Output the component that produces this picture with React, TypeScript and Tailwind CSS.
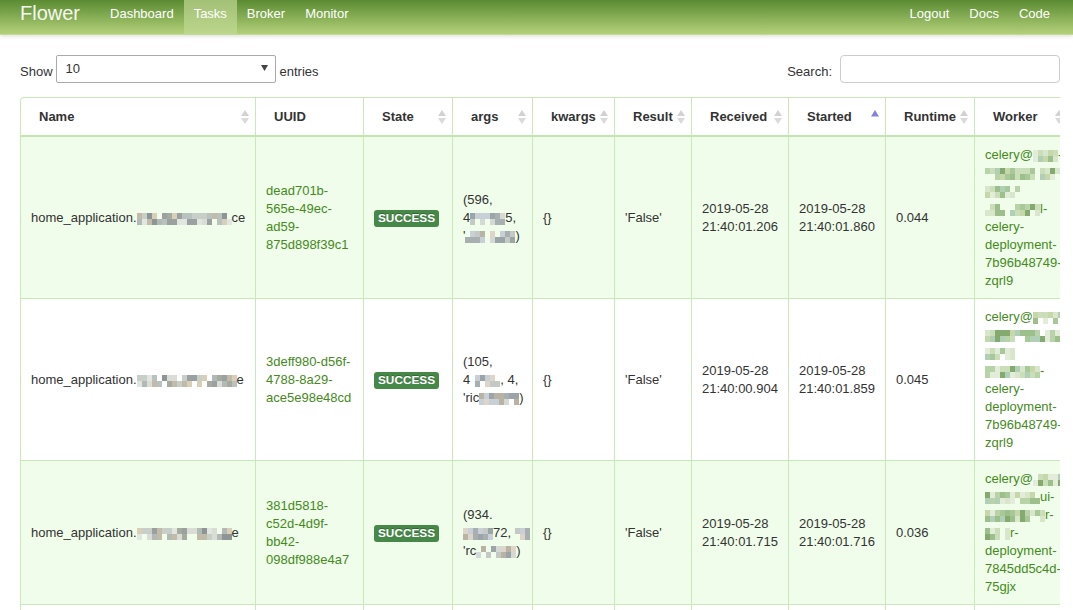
import React from 'react';

type Node = React.ReactNode;

function makeRand(seed: number) {
  let s = seed * 9973 + 17;
  return () => {
    s = (s * 16807) % 2147483647;
    return (s % 10000) / 10000;
  };
}

const GRAY = ['#9ba1a0', '#b3b9b5', '#c8cec8', '#d9ddd6', '#a6ab9f', '#c3bba9', '#8e9595', '#e2e6e0', '#bac2bf', '#d8cfb8'];
const GREEN = ['#9dbf8c', '#b8d3a7', '#cadfb9', '#85aa70', '#d8e7cb', '#a8c899', '#c6d8a9', '#e3ecd8', '#b0cfb6'];
const ARGS = ['#a8afb1', '#c4c9c6', '#b9b3a6', '#d4d9d5', '#9ba5a8', '#c8cfd6', '#ddd6c8'];

function Mosaic({ cols, seed, palette, rows = 2 }: { cols: number; seed: number; palette: string[]; rows?: number }) {
  const r = makeRand(seed);
  const cells: string[] = [];
  for (let i = 0; i < cols * rows; i++) {
    const a = r();
    const b = r();
    cells.push(a < 0.12 ? 'transparent' : palette[Math.floor(b * palette.length)]);
  }
  return (
    <span
      className="inline-grid align-middle"
      style={{ gridTemplateColumns: `repeat(${cols}, 5px)`, gridAutoRows: '6px' }}
    >
      {cells.map((c, i) => (
        <span key={i} style={{ backgroundColor: c }} />
      ))}
    </span>
  );
}

function SortIcon({ kind }: { kind: string }) {
  if (kind === 'none') return null;
  if (kind === 'asc')
    return (
      <svg width="8" height="14" viewBox="0 0 8 14" className="shrink-0">
        <polygon points="0,6.5 4,0 8,6.5" fill="#8383d9" />
      </svg>
    );
  return (
    <svg width="8" height="14" viewBox="0 0 8 14" className="shrink-0">
      <polygon points="0,6 4,0 8,6" fill="#d2d2d2" />
      <polygon points="0,8 4,14 8,8" fill="#dadada" />
    </svg>
  );
}

const COLS = [
  { label: 'Name', w: 'w-[234px]', sort: 'both' },
  { label: 'UUID', w: 'w-[108px]', sort: 'none' },
  { label: 'State', w: 'w-[89px]', sort: 'both' },
  { label: 'args', w: 'w-[80px]', sort: 'both' },
  { label: 'kwargs', w: 'w-[82px]', sort: 'both' },
  { label: 'Result', w: 'w-[77px]', sort: 'both' },
  { label: 'Received', w: 'w-[97px]', sort: 'both' },
  { label: 'Started', w: 'w-[97px]', sort: 'asc' },
  { label: 'Runtime', w: 'w-[89px]', sort: 'both' },
  { label: 'Worker', w: 'w-[95px]', sort: 'both' },
];

const L = (...lines: Node[]) => (
  <>
    {lines.map((l, i) => (
      <div key={i}>{l}</div>
    ))}
  </>
);

const G = ({ children }: { children: Node }) => <span className="text-[#458a1c]">{children}</span>;

const Badge = () => (
  <span className="inline-block rounded-[3px] bg-[#468847] px-[4px] py-[2px] text-[11.8px] font-bold leading-[13px] text-white [text-shadow:0_-1px_0_rgba(0,0,0,0.25)]">
    SUCCESS
  </span>
);

const rows: Node[][] = [
  [
    <>home_application.<Mosaic cols={19} seed={3} palette={GRAY} />ce</>,
    <G>{L('dead701b-', '565e-49ec-', 'ad59-', '875d898f39c1')}</G>,
    <Badge />,
    L('(596,', <>4<Mosaic cols={7} seed={11} palette={ARGS} />5,</>, <>'<Mosaic cols={10} seed={12} palette={ARGS} />)</>),
    '{}',
    "'False'",
    L('2019-05-28', '21:40:01.206'),
    L('2019-05-28', '21:40:01.860'),
    '0.044',
    <G>
      {L(
        <>celery@<Mosaic cols={5} seed={21} palette={GREEN} />-</>,
        <Mosaic cols={15} seed={22} palette={GREEN} />,
        <Mosaic cols={7} seed={23} palette={GREEN} />,
        <><Mosaic cols={11} seed={24} palette={GREEN} />l-</>,
        'celery-',
        'deployment-',
        '7b96b48749-',
        'zqrl9'
      )}
    </G>,
  ],
  [
    <>home_application.<Mosaic cols={20} seed={5} palette={GRAY} />e</>,
    <G>{L('3deff980-d56f-', '4788-8a29-', 'ace5e98e48cd')}</G>,
    <Badge />,
    L('(105,', <>4<Mosaic cols={6} seed={31} palette={ARGS} />, 4,</>, <>'ric<Mosaic cols={8} seed={32} palette={ARGS} />)</>),
    '{}',
    "'False'",
    L('2019-05-28', '21:40:00.904'),
    L('2019-05-28', '21:40:01.859'),
    '0.045',
    <G>
      {L(
        <>celery@<Mosaic cols={6} seed={41} palette={GREEN} /></>,
        <Mosaic cols={15} seed={42} palette={GREEN} />,
        <Mosaic cols={6} seed={43} palette={GREEN} />,
        <><Mosaic cols={11} seed={44} palette={GREEN} />-</>,
        'celery-',
        'deployment-',
        '7b96b48749-',
        'zqrl9'
      )}
    </G>,
  ],
  [
    <>home_application.<Mosaic cols={19} seed={7} palette={GRAY} />e</>,
    <G>{L('381d5818-', 'c52d-4d9f-', 'bb42-', '098df988e4a7')}</G>,
    <Badge />,
    L('(934.', <><Mosaic cols={6} seed={51} palette={ARGS} />72, <Mosaic cols={3} seed={52} palette={ARGS} /></>, <>'rc<Mosaic cols={8} seed={53} palette={ARGS} />)</>),
    '{}',
    "'False'",
    L('2019-05-28', '21:40:01.715'),
    L('2019-05-28', '21:40:01.716'),
    '0.036',
    <G>
      {L(
        <>celery@<Mosaic cols={6} seed={61} palette={GREEN} /></>,
        <><Mosaic cols={11} seed={62} palette={GREEN} />ui-</>,
        <><Mosaic cols={12} seed={63} palette={GREEN} />r-</>,
        <><Mosaic cols={5} seed={64} palette={GREEN} />r-</>,
        'deployment-',
        '7845dd5c4d-',
        '75gjx'
      )}
    </G>,
  ],
  [
    <>home_application.<Mosaic cols={19} seed={9} palette={GRAY} />e</>,
    <G>{L('5a1c0e77-', '91b2-4f3a-', 'a0c1-', '3e9f2b7d8c11')}</G>,
    <Badge />,
    L('(212,', <>4<Mosaic cols={6} seed={71} palette={ARGS} />3,</>, <>'<Mosaic cols={9} seed={72} palette={ARGS} />)</>),
    '{}',
    "'False'",
    L('2019-05-28', '21:40:00.512'),
    L('2019-05-28', '21:40:01.602'),
    '0.041',
    <G>
      {L(
        <>celery@<Mosaic cols={6} seed={81} palette={GREEN} /></>,
        <Mosaic cols={15} seed={82} palette={GREEN} />,
        <Mosaic cols={6} seed={83} palette={GREEN} />,
        <><Mosaic cols={11} seed={84} palette={GREEN} />-</>,
        'celery-',
        'deployment-',
        '7b96b48749-',
        'zqrl9'
      )}
    </G>,
  ],
];

function Row({ cells, green }: { cells: Node[]; green: boolean }) {
  return (
    <div className={`flex w-[1050px] border-b border-l border-[#c9e9b9] ${green ? 'bg-[#effdea]' : 'bg-white'}`}>
      {cells.map((c, i) => (
        <div
          key={i}
          className={`${COLS[i].w} shrink-0 flex items-center px-[10px] pt-[9px] pb-[8px] leading-[18px] ${i > 0 ? 'border-l border-[#c9e9b9]' : ''}`}
        >
          <div className="whitespace-nowrap">{c}</div>
        </div>
      ))}
      <div className="border-l border-[#c9e9b9]" />
    </div>
  );
}

export default function App() {
  return (
    <div className="min-h-[610px] bg-white font-['Liberation_Sans',Arial,sans-serif] text-[13px] text-[#333]">
      {/* Navbar */}
      <div className="flex h-[35px] items-start justify-between border-b border-[#c2da94] bg-[linear-gradient(to_bottom,#5a8b32,#b3d079)] pl-[20px] pr-[13px] shadow-[0_1px_4px_rgba(0,0,0,0.15)]">
        <div className="flex h-[34px] items-start">
          <div className="mr-[20px] pt-[1px] text-[20px] leading-[24px] text-[#f5f7f0]">Flower</div>
          {['Dashboard', 'Tasks', 'Broker', 'Monitor'].map((t) => (
            <div
              key={t}
              className={`h-[34px] px-[10px] pt-[5px] leading-[18px] text-white ${t === 'Tasks' ? 'bg-[linear-gradient(to_bottom,#a2c076,#bcd78c)]' : ''}`}
            >
              {t}
            </div>
          ))}
        </div>
        <div className="flex h-[34px] items-start">
          {['Logout', 'Docs', 'Code'].map((t) => (
            <div key={t} className="h-[34px] px-[10px] pt-[5px] leading-[18px] text-white">
              {t}
            </div>
          ))}
        </div>
      </div>

      <div className="pl-[20px] pr-[13px]">
        {/* Controls */}
        <div className="mt-[20px] flex h-[28px] items-center justify-between">
          <div className="flex items-center">
            <span className="mt-[6px]">Show</span>
            <div className="ml-[3px] flex h-[28px] w-[220px] items-center justify-between rounded-[2px] border border-[#aaaaaa] bg-white pl-[9px] pr-[7px]">
              <span>10</span>
              <svg width="7" height="6" viewBox="0 0 7 6" className="-mt-[2px]">
                <polygon points="0,0 7,0 3.5,6" fill="#444" />
              </svg>
            </div>
            <span className="ml-[4px] mt-[6px]">entries</span>
          </div>
          <div className="flex items-center">
            <span className="mt-[6px]">Search:</span>
            <div className="ml-[8px] h-[28px] w-[220px] rounded-[4px] border border-[#cccccc] bg-white" />
          </div>
        </div>

        {/* Table */}
        <div className="mt-[14px] w-[1040px] overflow-hidden">
          <div className="flex w-[1050px] rounded-tl-[4px] border-l border-t border-b-2 border-[#c9e9b9] border-b-[#c3e6b0] bg-white">
            {COLS.map((c, i) => (
              <div
                key={c.label}
                className={`${c.w} flex h-[37px] shrink-0 items-center justify-between pl-[18px] pr-[6px] font-bold ${i > 0 ? 'border-l border-[#c9e9b9]' : ''}`}
              >
                <span>{c.label}</span>
                <SortIcon kind={c.sort} />
              </div>
            ))}
            <div className="border-l border-[#c9e9b9]" />
          </div>
          {rows.map((r, i) => (
            <Row key={i} cells={r} green={i % 2 === 0} />
          ))}
        </div>
      </div>
    </div>
  );
}
